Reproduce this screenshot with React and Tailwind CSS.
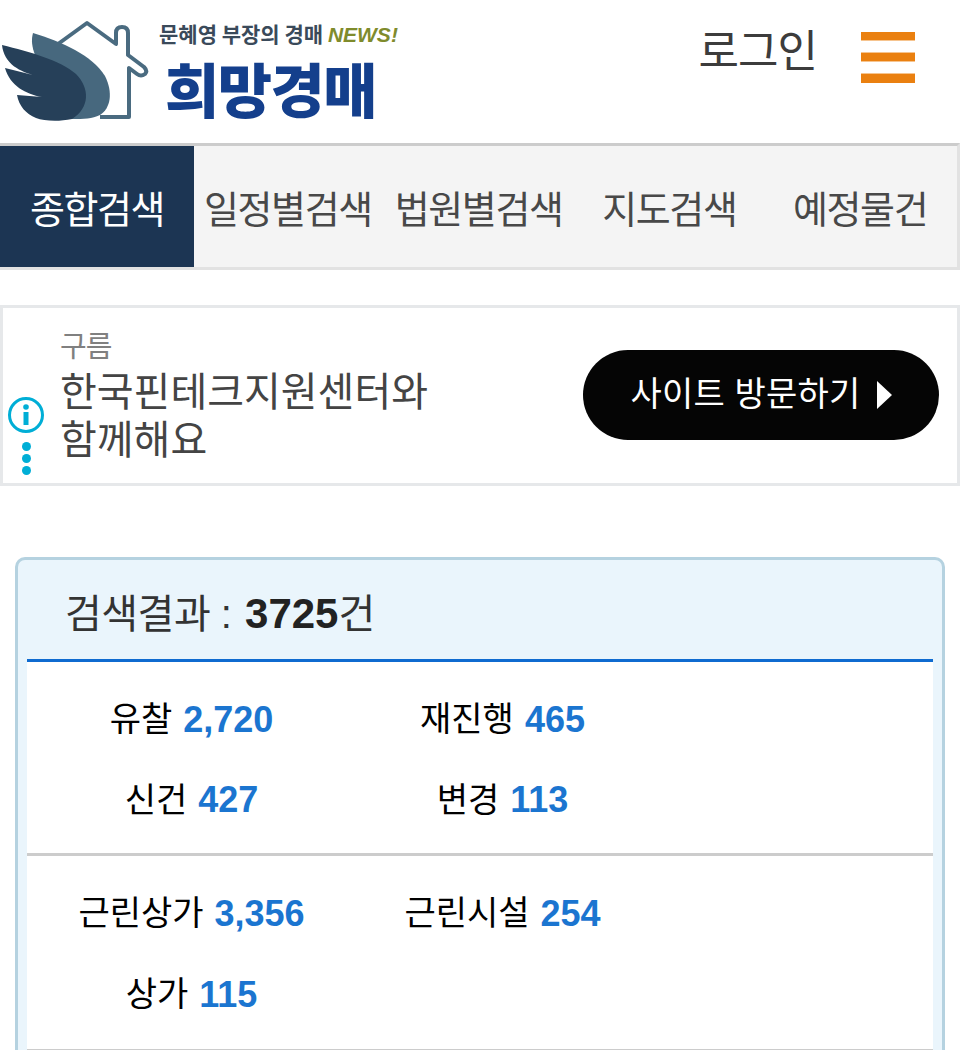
import React from 'react';

const KR = "font-['Liberation_Sans','Noto_Sans_CJK_KR',sans-serif]";

const Logo = () => (
  <div className="flex items-start">
    <svg width="150" height="124" viewBox="0 0 150 124" className="shrink-0">
      <path d="M58 44 L87 23 L116 44 L116 33 Q116 27 122 27 Q128 27 128 33 L128 55 L144 67 Q148 71 145 74 Q141 77 137 74 L129 68 L129 117 L100 117" fill="none" stroke="#4a6b80" strokeWidth="4" strokeLinejoin="round" />
      <path d="M33 33 C62 42 92 55 105 76 C113 92 111 108 100 115 C92 119 84 119 72 119 L35 55 C32 47 31 40 33 33 Z" fill="#47687e" />
      <path d="M2 45 C30 52 60 60 76 74 C90 88 90 108 72 119 C58 122 44 121 36 118 C26 114 19 106 17 95 L42 97 C26 94 10 86 5 68 L37 76 C20 72 4 64 2 45 Z" fill="#264059" />
    </svg>
    <div className="ml-[9px] flex flex-col">
      <div className="mt-[20px] h-[26px] text-[21px] leading-[26px] font-bold whitespace-nowrap text-[#3a4a5a] font-['Noto_Sans_CJK_KR',sans-serif]">
        문혜영 부장의 경매 <span className="italic text-[#7f8b2c] font-['Liberation_Sans',sans-serif]">NEWS!</span>
      </div>
      <div className="ml-[6px] mt-[11px] text-[59px] leading-[62px] font-black tracking-[-1.5px] whitespace-nowrap text-[#143f8c] font-['Noto_Sans_CJK_KR',sans-serif]">희망경매</div>
    </div>
  </div>
);

const Tab = ({ label, active }) => (
  <div className={active
    ? "w-[194px] shrink-0 flex items-center justify-center pt-[7px] bg-[#1c3553] text-white"
    : "flex-1 flex items-center justify-center pt-[7px] pr-[3px] text-[#484848]"}>
    {label}
  </div>
);

const Stat = ({ label, value }) => (
  <div className="w-[311px] flex items-center justify-center gap-[11px] whitespace-nowrap">
    <span className="text-black">{label}</span>
    <b className="text-[#1b75d0] font-['Liberation_Sans',sans-serif] font-bold text-[36px]">{value}</b>
  </div>
);

export default function App() {
  return (
    <div className={`w-[960px] h-[1050px] overflow-hidden bg-white ${KR}`}>
      <header className="h-[143px] flex items-start justify-between">
        <Logo />
        <div className="flex items-start">
          <span className="mt-[25px] text-[44px] leading-[54px] tracking-[-1px] text-[#3c3c3c]">로그인</span>
          <div className="ml-[44px] mr-[45px] mt-[32px] w-[54px] h-[51px] flex flex-col justify-between">
            <div className="h-[9px] bg-[#ea8010] border-b border-[#f6c48f]" />
            <div className="h-[10px] bg-[#ea8010] border-y border-[#f6c48f]" />
            <div className="h-[10px] bg-[#ea8010] border-t border-[#f6c48f]" />
          </div>
        </div>
      </header>

      <nav className="h-[127px] flex border-t-[3px] border-t-[#cccccc] border-b-[3px] border-b-[#e2e2e2] border-r-[3px] border-r-[#e2e2e2] bg-[#f4f4f4] text-[38px] tracking-[-1.4px] whitespace-nowrap">
        <Tab label="종합검색" active />
        <Tab label="일정별검색" />
        <Tab label="법원별검색" />
        <Tab label="지도검색" />
        <Tab label="예정물건" />
      </nav>

      <section className="mt-[35px] h-[181px] border-[3px] border-[#e6e8ea] flex items-center justify-between relative">
        <div className="absolute left-[4px] top-[88px] flex flex-col items-center">
          <svg width="38" height="38" viewBox="0 0 38 38">
            <circle cx="19" cy="19" r="16.5" fill="none" stroke="#00aed6" strokeWidth="3" />
            <circle cx="19" cy="11" r="2.8" fill="#00aed6" />
            <rect x="16.5" y="16" width="5" height="13" fill="#00aed6" />
          </svg>
          <div className="mt-[8px] flex flex-col gap-[3px]">
            <div className="w-[9px] h-[9px] rounded-full bg-[#00aed6]" />
            <div className="w-[9px] h-[9px] rounded-full bg-[#00aed6]" />
            <div className="w-[9px] h-[9px] rounded-full bg-[#00aed6]" />
          </div>
        </div>
        <div className="ml-[57px] pt-[3px] flex flex-col">
          <span className="text-[29px] leading-[34px] tracking-[-1px] text-[#808080]">구름</span>
          <span className="mt-[4px] text-[40px] leading-[48px] text-[#444444]">한국핀테크지원센터와<br />함께해요</span>
        </div>
        <div className="mr-[18px] mb-[2px] w-[356px] h-[90px] rounded-[45px] bg-[#050505] flex items-center justify-center gap-[16px] text-white text-[34px] tracking-[0.2px]">
          사이트 방문하기
          <svg width="15" height="28" viewBox="0 0 15 28"><path d="M0 0 L15 14 L0 28 Z" fill="#ffffff" /></svg>
        </div>
      </section>

      <section className="mt-[71px] mx-[15px] rounded-[10px] border-[3px] border-b-0 border-[#b5d2e0] bg-[#eaf5fc] px-[9px] h-[560px]">
        <div className="h-[99px] pl-[38px] pt-[8px] flex items-center text-[40px] tracking-[-0.5px] text-[#333333] whitespace-nowrap">
          검색결과 :&nbsp;<b className="ml-[3px] font-['Liberation_Sans',sans-serif] font-bold text-[42px] tracking-[0px] text-[#222222]">3725</b>건
        </div>
        <div className="bg-white border-t-[3px] border-[#0f6bd0] text-[34px]">
          <div className="h-[194px] border-b-[3px] border-[#cccccc] pl-[9px] pt-[17px]">
            <div className="flex h-[81px]"><Stat label="유찰" value="2,720" /><Stat label="재진행" value="465" /></div>
            <div className="flex h-[80px]"><Stat label="신건" value="427" /><Stat label="변경" value="113" /></div>
          </div>
          <div className="h-[195px] border-b-[2px] border-[#cccccc] pl-[9px] pt-[17px]">
            <div className="flex h-[81px]"><Stat label="근린상가" value="3,356" /><Stat label="근린시설" value="254" /></div>
            <div className="flex h-[81px]"><Stat label="상가" value="115" /></div>
          </div>
        </div>
      </section>
    </div>
  );
}
